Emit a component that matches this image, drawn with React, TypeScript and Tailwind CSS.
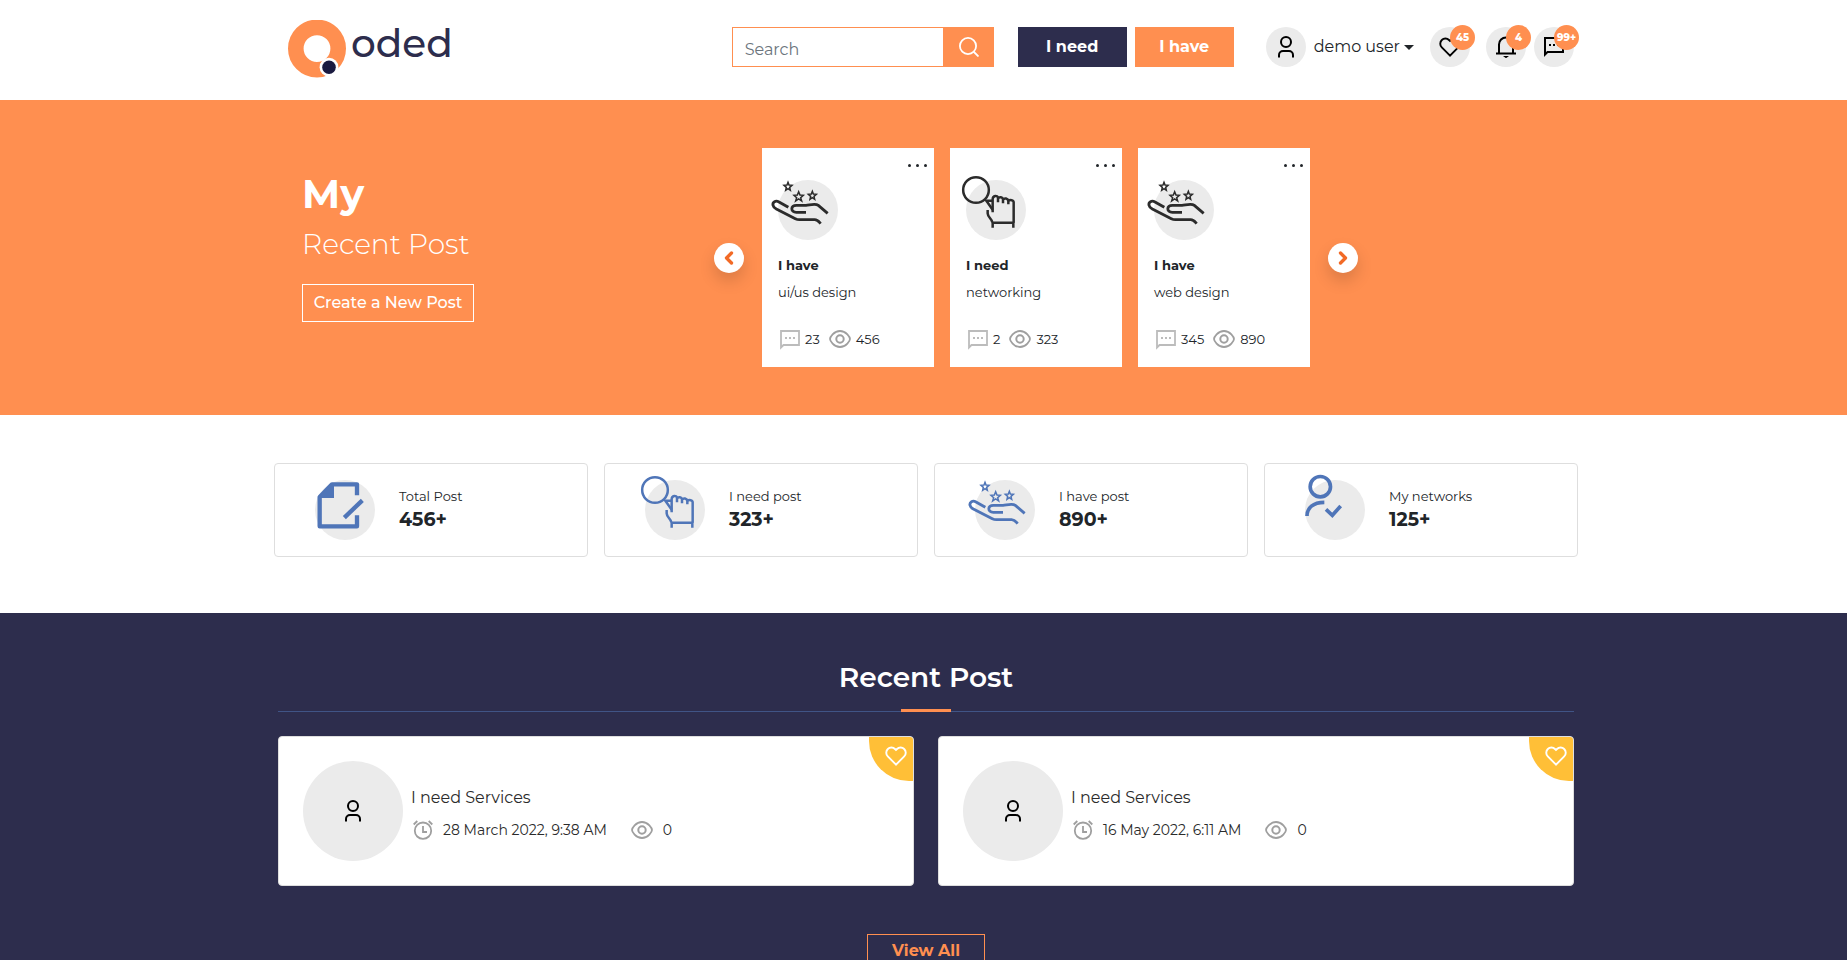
import type { ReactNode } from "react";
import { ChevronLeft, ChevronRight } from "lucide-react";

type IconProps = { className?: string };

type MyPost = {
  kind: "have" | "need";
  title: string;
  comments: number;
  views: number;
};

const myPosts: MyPost[] = [
  { kind: "have", title: "ui/us design", comments: 23, views: 456 },
  { kind: "need", title: "networking", comments: 2, views: 323 },
  { kind: "have", title: "web design", comments: 345, views: 890 },
];

const recentPosts = [
  { title: "I need Services", date: "28 March 2022, 9:38 AM", views: 0 },
  { title: "I need Services", date: "16 May 2022, 6:11 AM", views: 0 },
];

function Logo() {
  return (
    <a href="#" className="flex gap-[5px] text-[#2d2d4d]">
      <svg viewBox="0 0 58 58" className="size-[58px]" aria-hidden="true">
        <circle cx="29" cy="28.6" r="21.2" fill="none" stroke="#ff8f50" strokeWidth="15.6" />
        <circle cx="41" cy="47.2" r="9.4" fill="#fff" />
        <circle cx="41" cy="47.2" r="6.8" fill="#1a1a40" />
      </svg>
      <span className="text-[39px] leading-[46px] font-medium">oded</span>
    </a>
  );
}

function UserIcon({ className }: IconProps) {
  return (
    <svg viewBox="0 0 16 22" className={className} fill="none" stroke="#000" strokeWidth="2" aria-hidden="true">
      <circle cx="8" cy="6" r="5" />
      <path d="M1 21.500v-2.500a4 4 0 0 1 4-4h6a4 4 0 0 1 4 4v2.500" />
    </svg>
  );
}

function HeartIcon({ className }: IconProps) {
  return (
    <svg viewBox="0 0 22 20" className={className} fill="none" stroke="currentColor" strokeWidth="1.900" aria-hidden="true">
      <path d="M11 18.600 2.800 10.400a5.200 5.200 0 0 1 0-7.400 5 5 0 0 1 7.200 0l1 1 1-1a5 5 0 0 1 7.200 0 5.200 5.200 0 0 1 0 7.400z" />
    </svg>
  );
}

function BellIcon() {
  return (
    <svg viewBox="0 0 20 22" className="h-[22px] w-5" fill="none" stroke="#000" strokeWidth="2" aria-hidden="true">
      <path d="M3 17V8.500a7 7 0 0 1 14 0V17M0 17.500h20" />
      <path d="M7 20h6l-3 2.200z" fill="#000" stroke="none" />
    </svg>
  );
}

function ChatIcon({ className, width = 2 }: IconProps & { width?: number }) {
  return (
    <svg viewBox="0 0 20 20" className={className} fill="none" stroke="currentColor" strokeWidth={width} aria-hidden="true">
      <path d="M1 17.500V1h18v14H3.500z" />
      <path d="M5 8h2M9 8h2M13 8h2" strokeWidth="1.800" />
    </svg>
  );
}

function EyeIcon() {
  return (
    <svg viewBox="0 0 22 18" className="h-[18px] w-[22px] text-[#9f9f9f]" fill="none" stroke="currentColor" strokeWidth="1.800" aria-hidden="true">
      <path d="M1 9c0-1.400 3.700-8 10-8s10 6.600 10 8-3.700 8-10 8S1 10.400 1 9z" />
      <circle cx="11" cy="9" r="3.700" strokeWidth="2" />
    </svg>
  );
}

function AlarmIcon() {
  return (
    <svg viewBox="0 0 20 20" className="size-5 text-[#9f9f9f]" fill="none" stroke="currentColor" strokeWidth="1.800" aria-hidden="true">
      <circle cx="10" cy="10.700" r="8.200" />
      <path d="M10 6v6h4M.700 4.500 4.300 1M19.300 4.500 15.700 1" />
    </svg>
  );
}

function HandArt() {
  return (
    <g fill="none" stroke="currentColor" strokeWidth="8.500">
      <path d="M31 82 3 66C-7 60-17 66-15 76c1 5 4 8 10 11l57 29c4 2 7 3 12 3h46c9 0 12 5 18 12" />
      <path d="M84 97H55C37 97 37 76 55 76h29c12-1 28-7 37 0l28 24" />
      <g strokeWidth="4.500">
        <path d="m30 7 3 8 9 1-7 6 2 9-7-5-7 5 2-9-7-6 9-1z" />
        <path d="m62 35 4 10 10 1-8 7 3 10-9-6-9 6 3-10-8-7 10-1z" />
        <path d="m103 34 3 8 9 1-7 6 2 9-7-5-7 5 2-9-7-6 9-1z" />
      </g>
    </g>
  );
}

function SearchHandArt() {
  return (
    <g fill="none" stroke="currentColor" strokeWidth="7.500">
      <circle cx="30" cy="30" r="38.500" />
      <path d="M80 97V58c0-13 15-13 16-4v13M96 55c4-6 14-4 15 3v12M111 59c4-6 15-4 16 4v10M127 63c5-5 16-3 16 4v61" />
      <path d="M79 128h64M80 126v17M142 126v17M65 90v10c1 13 11 14 14 27M80 62H61l19 27" />
    </g>
  );
}

function DocumentArt() {
  return (
    <g fill="none" stroke="currentColor" strokeWidth="13" strokeLinejoin="round">
      <path d="M126 46V13H51L14 51v88h112v-33" />
      <path d="M50 10 10 50v4h47V10z" fill="currentColor" stroke="none" />
      <path d="m88 113 54-52" />
    </g>
  );
}

function NetworkArt() {
  return (
    <g fill="none" stroke="currentColor" strokeWidth="11">
      <circle cx="46" cy="20" r="30.500" />
      <path d="M6 108c0-24 18-41 52-41M63 88l19 18 25-28" />
    </g>
  );
}

// 60px grey disc with artwork that is allowed to spill over its edge
function Bubble({ children, className }: { children: ReactNode; className: string }) {
  return (
    <svg viewBox="0 0 180 180" className={`size-[60px] shrink-0 overflow-visible ${className}`} aria-hidden="true">
      <circle cx="90" cy="90" r="90" fill="#ebebeb" />
      {children}
    </svg>
  );
}

function NoticeButton({ label, count, children }: { label: string; count: string; children: ReactNode }) {
  return (
    <button aria-label={label} className="relative flex size-10 items-center justify-center rounded-full bg-[#ebebeb]">
      {children}
      <span className="absolute -top-[2px] -right-[5px] flex size-[25px] items-center justify-center rounded-full bg-[#ff8f50] text-[10px] font-extrabold text-white">
        {count}
      </span>
    </button>
  );
}

function Header() {
  return (
    <header className="bg-white pl-[5px]">
      <div className="mx-auto flex h-[100px] max-w-[1320px] items-start justify-between pr-3 pl-[22px]">
        <div className="pt-5">
          <Logo />
        </div>
        <div className="flex items-center pt-[27px]">
          <form className="mr-6 flex h-10">
            <input
              type="search"
              aria-label="Search"
              placeholder="Search"
              className="w-[212px] border border-[#ff8f50] px-3 pt-[6px] text-base outline-none placeholder:text-[#6c757d]"
            />
            <button type="button" aria-label="Submit search" className="flex w-[50px] items-center justify-center bg-[#ff8f50]">
              <svg viewBox="0 0 20 20" className="size-5" fill="none" stroke="#fff" strokeWidth="1.800" aria-hidden="true">
                <circle cx="9" cy="9" r="8.100" />
                <path d="m14.500 14.500 5 5" />
              </svg>
            </button>
          </form>
          <button className="mr-2 h-10 w-[109px] bg-[#2d2d4d] text-base font-bold text-white">I need</button>
          <button className="mr-8 h-10 w-[99px] bg-[#ff8f50] text-base font-bold text-white">I have</button>
          <button className="mr-4 flex items-center text-base text-[#212529]">
            <span className="mr-2 flex size-10 items-center justify-center rounded-full bg-[#ebebeb]">
              <UserIcon className="h-[22px] w-4" />
            </span>
            <span className="whitespace-nowrap">demo user</span>
            <span className="ml-1 border-x-[5px] border-t-[5px] border-x-transparent border-t-[#212529]" />
          </button>
          <div className="flex gap-2">
            <div className="mr-2">
              <NoticeButton label="Favourites" count="45">
                <HeartIcon className="h-5 w-[22px] text-black" />
              </NoticeButton>
            </div>
            <NoticeButton label="Notifications" count="4">
              <BellIcon />
            </NoticeButton>
            <NoticeButton label="Messages" count="99+">
              <ChatIcon className="size-5 text-black" />
            </NoticeButton>
          </div>
        </div>
      </div>
    </header>
  );
}

function PostCard({ post }: { post: MyPost }) {
  return (
    <article className="flex h-[219px] w-[172px] flex-col bg-white px-4 text-[13px] leading-5 text-[#212529]">
      <button aria-label="Post options" className="-mr-3 flex h-8 items-end justify-end gap-[5px] pr-[3px] pb-[13px]">
        <span className="size-[3px] rounded-full bg-[#212529]" />
        <span className="size-[3px] rounded-full bg-[#212529]" />
        <span className="size-[3px] rounded-full bg-[#212529]" />
      </button>
      <Bubble className="text-[#2b2b2b]">{post.kind === "have" ? <HandArt /> : <SearchHandArt />}</Bubble>
      <h3 className="mt-[15px] font-bold">{post.kind === "have" ? "I have" : "I need"}</h3>
      <p className="mt-[7px]">{post.title}</p>
      <div className="mt-[26px] ml-[2px] flex items-center">
        <ChatIcon className="mt-[2px] size-5 text-[#bcbcbc]" width={1.8} />
        <span className="mr-[9px] ml-[5px]">{post.comments}</span>
        <EyeIcon />
        <span className="ml-[5px]">{post.views}</span>
      </div>
    </article>
  );
}

function Hero() {
  return (
    <section className="bg-[#ff8f50] py-12 pl-[5px]">
      <div className="mx-auto flex max-w-[1320px] items-center pl-9">
        <div className="w-[412px] pb-6 text-white">
          <h1 className="text-[40px] leading-12 font-bold">My</h1>
          <p className="mt-[2px] text-[28px] leading-12 font-light">Recent Post</p>
          <button className="mt-4 h-[38px] w-[172px] border border-white text-base font-medium">
            Create a New Post
          </button>
        </div>
        <div className="flex items-center gap-[18px]">
          <button aria-label="Previous" className="flex size-[30px] items-center justify-center rounded-full bg-white text-[#f26a26] shadow-[0_8px_16px_rgba(0,0,0,0.15)]">
            <ChevronLeft className="size-5" strokeWidth={4} />
          </button>
          <div className="flex gap-4">
            {myPosts.map((post) => (
              <PostCard key={post.title} post={post} />
            ))}
          </div>
          <button aria-label="Next" className="flex size-[30px] items-center justify-center rounded-full bg-white text-[#f26a26] shadow-[0_8px_16px_rgba(0,0,0,0.15)]">
            <ChevronRight className="size-5" strokeWidth={4} />
          </button>
        </div>
      </div>
    </section>
  );
}

function Stat({ label, value, children }: { label: string; value: string; children: ReactNode }) {
  return (
    <div className="flex h-[94px] items-start gap-6 rounded border border-[#dedede] bg-white pt-4 pl-10 text-[#212529]">
      <Bubble className="text-[#4f75b8]">{children}</Bubble>
      <div className="pt-[6px]">
        <p className="text-[13px] leading-5">{label}</p>
        <p className="text-[19px] leading-[27px] font-bold">{value}</p>
      </div>
    </div>
  );
}

function Stats() {
  return (
    <section className="bg-white pt-12 pb-14 pl-[5px]">
      <div className="mx-auto grid max-w-[1320px] grid-cols-4 gap-4 px-2">
        <Stat label="Total Post" value="456+">
          <DocumentArt />
        </Stat>
        <Stat label="I need post" value="323+">
          <SearchHandArt />
        </Stat>
        <Stat label="I have post" value="890+">
          <HandArt />
        </Stat>
        <Stat label="My networks" value="125+">
          <NetworkArt />
        </Stat>
      </div>
    </section>
  );
}

function RecentPosts() {
  return (
    <section className="bg-[#2d2d4d] pt-10 pb-12 pl-[5px]">
      <div className="mx-auto max-w-[1320px] px-3">
        <div className="relative border-b border-[#405486] pt-2 pb-[18px]">
          <h2 className="text-center text-[28px] leading-8 font-semibold text-white">Recent Post</h2>
          <div className="absolute -bottom-px left-1/2 h-[3px] w-[50px] -translate-x-1/2 bg-[#ff8f50]" />
        </div>
        <div className="mt-6 grid grid-cols-2 gap-6">
          {recentPosts.map((post) => (
            <article
              key={post.date}
              className="relative flex h-[150px] items-center gap-2 overflow-hidden rounded border border-[#dedede] bg-white pl-6 text-[#2b2b2b]"
            >
              <div className="flex size-[100px] items-center justify-center rounded-full bg-[#ebebeb]">
                <UserIcon className="h-[22px] w-4" />
              </div>
              <div className="pt-[6px]">
                <h3 className="text-base leading-6">{post.title}</h3>
                <div className="mt-2 flex items-center text-sm leading-6">
                  <span className="ml-[2px] flex items-center gap-[10px]">
                    <AlarmIcon />
                    {post.date}
                  </span>
                  <span className="ml-6 flex items-center gap-[10px]">
                    <EyeIcon />
                    {post.views}
                  </span>
                </div>
              </div>
              <button
                aria-label="Save post"
                className="absolute -top-px -right-px flex size-[45px] items-center justify-center rounded-bl-[40px] bg-[#ffbf37] pb-[6px] pl-2 text-white"
              >
                <HeartIcon className="h-5 w-[22px]" />
              </button>
            </article>
          ))}
        </div>
        <div className="mt-12 flex justify-center">
          <a href="#" className="border border-[#ff8f50] px-6 py-1 text-base leading-6 font-bold text-[#ff8f50]">
            View All
          </a>
        </div>
      </div>
    </section>
  );
}

export default function App() {
  return (
    <div className="min-h-screen bg-white font-[Montserrat,Inter,sans-serif]">
      <Header />
      <Hero />
      <Stats />
      <RecentPosts />
    </div>
  );
}
